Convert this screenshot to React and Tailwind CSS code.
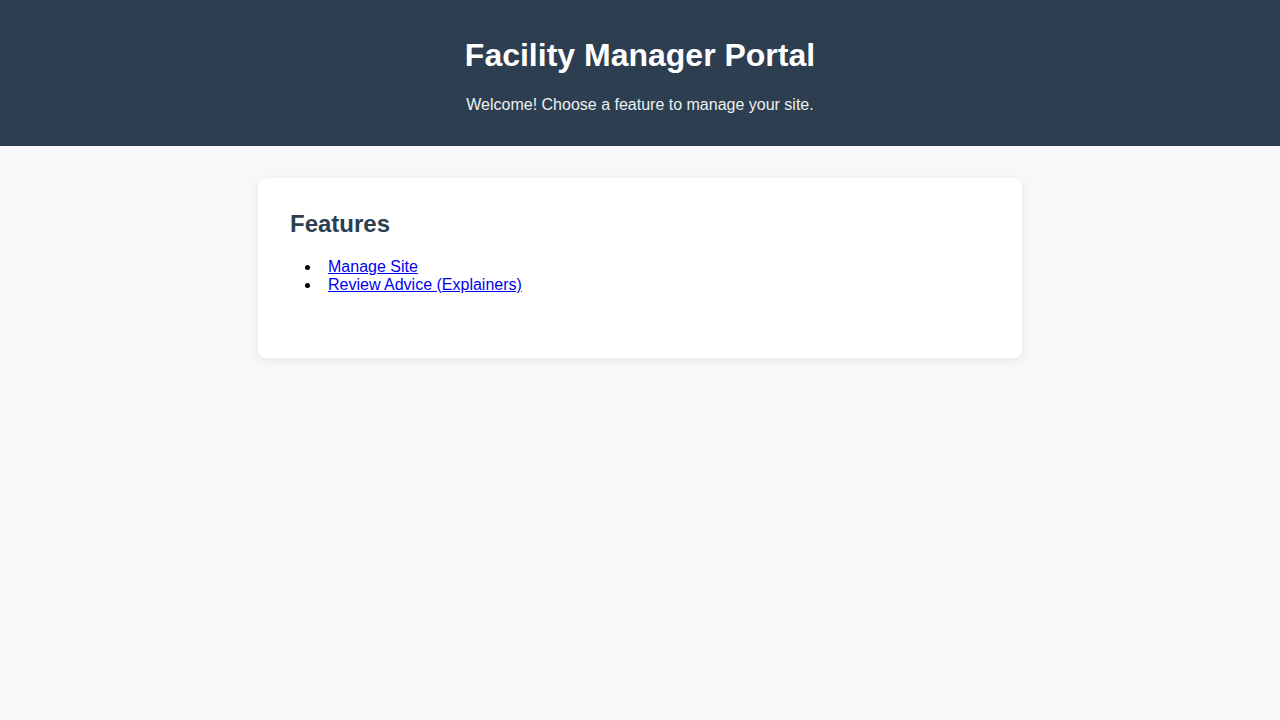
import React from "react";

export default function App() {
  const features = [
    { label: "Manage Site", href: "#manage" },
    { label: "Review Advice (Explainers)", href: "#advice" },
  ];

  return (
    <div className="min-h-screen bg-[#f7f8fa] font-['Liberation_Sans',Arial,sans-serif] text-[16px] text-black">
      {/* Header */}
      <header className="bg-[#2c3e50] text-center py-4">
        <h1 className="mt-[21px] mb-[22px] text-[32px] leading-[37px] font-bold text-white">Facility Manager Portal</h1>
        <p className="mb-4 leading-[18px] text-[#ecf0f1]">Welcome! Choose a feature to manage your site.</p>
      </header>

      {/* Features card */}
      <main className="pt-8">
        <div className="mx-auto w-[764px] rounded-lg bg-white px-8 pt-8 pb-16 shadow-[0_2px_8px_rgba(0,0,0,0.08)]">
          <h2 className="mb-5 text-[24px] leading-[28px] font-bold text-[#2c3e50]">Features</h2>
          <ul className="list-disc pl-[31px]">
            {features.map((f) => (
              <li key={f.href} className="leading-[18px]">
                <a href={f.href} className="ml-[7px] text-[#0000ee] underline">
                  {f.label}
                </a>
              </li>
            ))}
          </ul>
        </div>
      </main>
    </div>
  );
}
